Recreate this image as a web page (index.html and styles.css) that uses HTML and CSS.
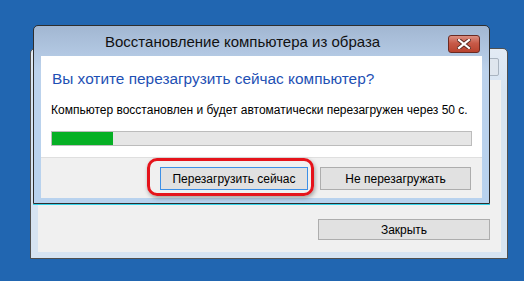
FILE: index.html
```html
<!DOCTYPE html>
<html>
<head>
  <meta charset="utf-8">
  <title>Восстановление компьютера из образа</title>
  <link rel="stylesheet" href="styles.css">
</head>
<body>
  <div class="desktop">
    <!-- окно мастера на заднем плане -->
    <div class="back-window">
      <div class="back-title">
        <span class="back-close"></span>
      </div>
      <div class="back-client">
        <div class="back-buttons">
          <button class="btn btn-close">Закрыть</button>
        </div>
      </div>
    </div>

    <!-- диалог перезагрузки -->
    <div class="dialog">
      <div class="titlebar">
        <span class="title">Восстановление компьютера из образа</span>
        <span class="close-x">
          <svg width="14" height="10" viewBox="0 0 14 10">
            <path d="M2 1 L12 9 M12 1 L2 9" stroke="#5a2a22" stroke-width="4" stroke-linecap="square"/>
            <path d="M2 1 L12 9 M12 1 L2 9" stroke="#ffffff" stroke-width="2.2" stroke-linecap="square"/>
          </svg>
        </span>
      </div>
      <div class="client">
        <div class="content">
          <h1 class="instruction">Вы хотите перезагрузить сейчас компьютер?</h1>
          <p class="text">Компьютер восстановлен и будет автоматически перезагружен через 50 с.</p>
          <div class="progress"><div class="progress-fill" style="width: 14.5%"></div></div>
        </div>
        <div class="footer">
          <div class="highlight-wrap">
            <button class="btn btn-default">Перезагрузить сейчас</button>
            <span class="highlight"></span>
          </div>
          <button class="btn">Не перезагружать</button>
        </div>
      </div>
    </div>
  </div>
</body>
</html>
```

FILE: styles.css
```css
/* рабочий стол Windows 8 */
* {
  box-sizing: border-box;
}

body {
  margin: 0;
  font-family: "Liberation Sans", Arial, sans-serif;
  background: #2166b1;
}

.desktop {
  position: relative;
  width: 524px;
  height: 281px;
  overflow: hidden;
}

/* заднее окно */
.back-window {
  position: absolute;
  left: 30px;
  top: 48px;
  width: 478px;
  height: 211px;
  border: 1px solid #505050;
  border-radius: 5px 5px 0 0;
  background: linear-gradient(#e3ebf4, #d7e4f2 40px);
  display: flex;
  flex-direction: column;
  padding: 0 6px 6px 7px;
}

.back-title {
  height: 31px;
  display: flex;
  justify-content: flex-end;
  padding-top: 9px;
}

.back-close {
  width: 32px;
  height: 18px;
  border: 1px solid #a9b4c0;
  border-radius: 2px;
  background: #dfe6ee;
  margin-right: 2px;
}

.back-client {
  flex: 1;
  background: #f0f0f0;
  display: flex;
  flex-direction: column;
  justify-content: flex-end;
}

.back-buttons {
  display: flex;
  justify-content: flex-end;
  padding: 0 11px 12px 0;
}

.btn {
  font-family: "Liberation Sans", Arial, sans-serif;
  font-size: 12px;
  color: #000;
  height: 23px;
  width: 151px;
  padding: 0;
  background: #e1e1e1;
  border: 1px solid #adadad;
  border-radius: 0;
}

.btn-close {
  width: 172px;
  height: 21px;
}

.btn-default {
  border-color: #3c8fe6;
  width: 148px;
}

/* диалог */
.dialog {
  position: absolute;
  left: 33px;
  top: 25px;
  width: 457px;
  height: 179px;
  border: 1px solid #2e2e2e;
  border-radius: 5px 5px 0 0;
  background: linear-gradient(#a2b7d2, #bcd2ec 45px, #b8d2ee);
  box-shadow: 0 1px 0 #35d3ea;
  display: flex;
  flex-direction: column;
  padding: 0 7px 5px 7px;
}

.titlebar {
  height: 30px;
  flex: none;
  display: flex;
  align-items: center;
  position: relative;
}

.title {
  font-size: 15px;
  color: #111;
  margin-left: 64px;
  margin-top: 1px;
}

.close-x {
  position: absolute;
  right: 2px;
  top: 9px;
  width: 32px;
  height: 18px;
  border: 1px solid #6b2a22;
  border-radius: 3px;
  background: linear-gradient(#dc8f82, #c75a48 45%, #b8432f);
  display: flex;
  align-items: center;
  justify-content: center;
}

.client {
  flex: 1;
  display: flex;
  flex-direction: column;
  background: #f0f0f0;
}

.content {
  background: #fff;
  height: 102px;
  border-bottom: 1px solid #dfdfdf;
  padding: 0 10px;
}

.instruction {
  margin: 0;
  padding: 13px 0 0 1px;
  font-size: 15.4px;
  line-height: 20px;
  font-weight: normal;
  color: #1e50b4;
}

.text {
  margin: 0;
  padding-top: 14px;
  font-size: 12px;
  line-height: 15px;
  white-space: nowrap;
  color: #000;
}

.progress {
  margin-top: 13px;
  height: 15px;
  border: 1px solid #bcbcbc;
  background: #e6e6e6;
}

.progress-fill {
  height: 100%;
  background: #06b025;
}

.footer {
  display: flex;
  justify-content: flex-end;
  gap: 12px;
  padding: 9px 11px 0 0;
}

.highlight-wrap {
  position: relative;
  display: flex;
}

.highlight {
  position: absolute;
  left: -13px;
  top: -9px;
  right: -6px;
  bottom: -6px;
  border: 3px solid #e5131b;
  border-radius: 10px;
  box-shadow: 1px 2px 4px rgba(0, 0, 0, 0.35);
}
```
